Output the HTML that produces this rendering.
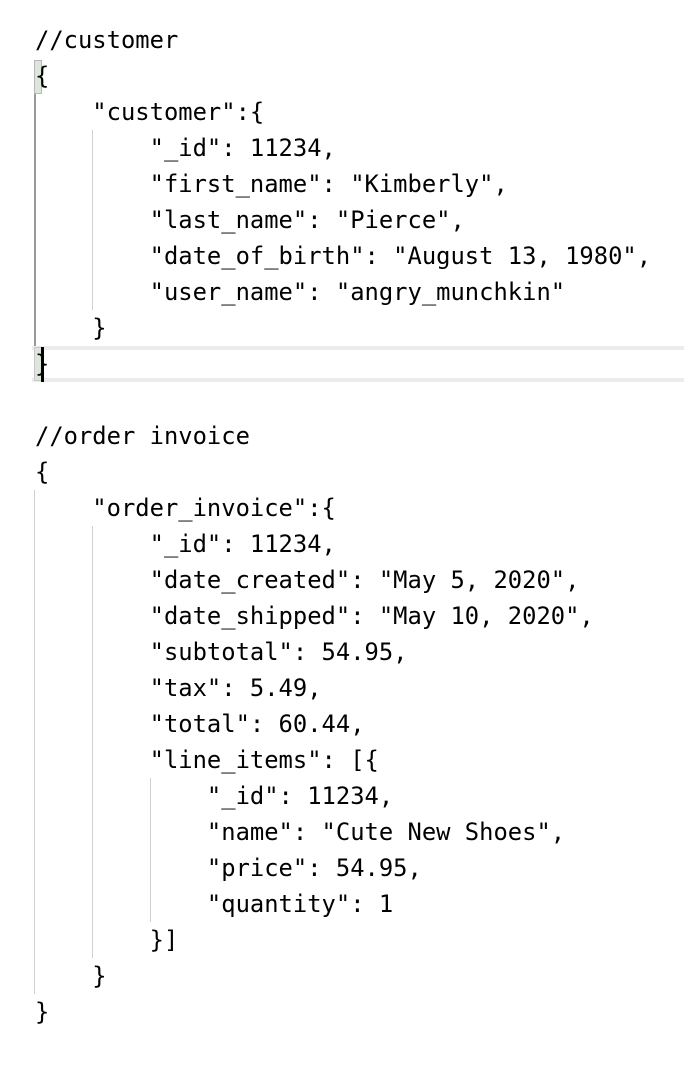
<!DOCTYPE html>
<html><head><style>
html,body{margin:0;padding:0;background:#fff;width:684px;height:1066px;overflow:hidden}
pre{position:absolute;left:35px;top:22px;margin:0;font-family:"DejaVu Sans Mono","Liberation Mono",monospace;font-size:23.8px;line-height:36px;color:#000}
.g{position:absolute;width:1px;background:#d0d0d0}
.hl{position:absolute;left:32px;width:652px;height:4px;background:#ececec}
.bx{position:absolute;left:34px;width:8px;background:#dde6da;border:1px solid #b8b8b8;box-sizing:border-box}
</style></head><body>
<div class="hl" style="top:346px"></div>
<div class="hl" style="top:378px"></div>
<div class="bx" style="top:60px;height:34px"></div>
<div class="bx" style="top:347px;height:34px;border-color:#c8c8c8"></div>
<div style="position:absolute;left:41px;top:347px;width:3px;height:35px;background:#000"></div>
<div class="g" style="left:34px;top:94px;height:252px;background:#999;width:2px"></div>
<div class="g" style="left:92px;top:130px;height:180px"></div>
<div class="g" style="left:34px;top:490px;height:504px"></div>
<div class="g" style="left:92px;top:526px;height:432px"></div>
<div class="g" style="left:150px;top:778px;height:144px"></div>
<pre>//customer
{
    "customer":{
        "_id": 11234,
        "first_name": "Kimberly",
        "last_name": "Pierce",
        "date_of_birth": "August 13, 1980",
        "user_name": "angry_munchkin"
    }
}

//order invoice
{
    "order_invoice":{
        "_id": 11234,
        "date_created": "May 5, 2020",
        "date_shipped": "May 10, 2020",
        "subtotal": 54.95,
        "tax": 5.49,
        "total": 60.44,
        "line_items": [{
            "_id": 11234,
            "name": "Cute New Shoes",
            "price": 54.95,
            "quantity": 1
        }]
    }
}</pre>
</body></html>
